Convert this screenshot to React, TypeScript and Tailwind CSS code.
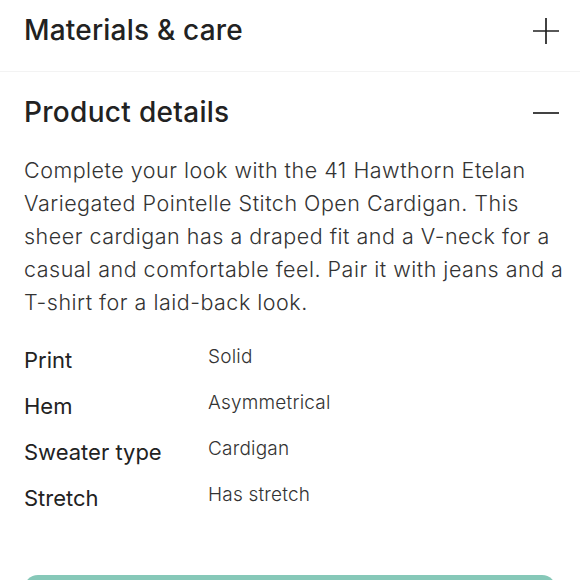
import React from "react";

const specs: [string, string][] = [
  ["Print", "Solid"],
  ["Hem", "Asymmetrical"],
  ["Sweater type", "Cardigan"],
  ["Stretch", "Has stretch"],
];

export default function App() {
  return (
    <div className="w-[580px] h-[580px] overflow-hidden bg-white" style={{ fontFamily: "Inter, 'Noto Sans', sans-serif" }}>
      <div className="flex items-start justify-between h-[72px] px-6 border-b border-[#f3f3f3]">
        <span className="mt-[13px] text-[28px] leading-[34px] font-medium tracking-[0.2px] text-[#222]">Materials &amp; care</span>
        <svg width="26" height="26" viewBox="0 0 26 26" className="mt-[18px] mr-[-3px]">
          <path d="M13 0V26M0 13H26" stroke="#222" strokeWidth="1.7" />
        </svg>
      </div>
      <div className="flex items-center justify-between h-[82px] px-6 pb-[2px]">
        <span className="text-[28px] font-medium tracking-[0.3px] text-[#222]">Product details</span>
        <svg width="26" height="4" viewBox="0 0 26 4" className="mr-[-3px] mt-[2px]">
          <path d="M0 2H26" stroke="#222" strokeWidth="1.7" />
        </svg>
      </div>
      <p className="px-6 text-[21.5px] leading-[33px] tracking-[0.5px] font-light text-[#333] whitespace-nowrap">
        Complete your look with the 41 Hawthorn Etelan<br />
        Variegated Pointelle Stitch Open Cardigan. This<br />
        sheer cardigan has a draped fit and a V-neck for a<br />
        casual and comfortable feel. Pair it with jeans and a<br />
        T-shirt for a laid-back look.
      </p>
      <div className="px-6 mt-[27px] flex flex-col">
        {specs.map(([k, v]) => (
          <div key={k} className="flex h-[46px]">
            <span className="w-[184px] text-[22px] text-[#222] leading-[28px]">{k}</span>
            <span className="text-[19px] font-light tracking-[0.2px] text-[#333] leading-[22px]">{v}</span>
          </div>
        ))}
      </div>
      <div className="mx-6 mt-[45px] h-[40px] rounded-t-[14px] bg-[#86c8b8]" />
    </div>
  );
}
